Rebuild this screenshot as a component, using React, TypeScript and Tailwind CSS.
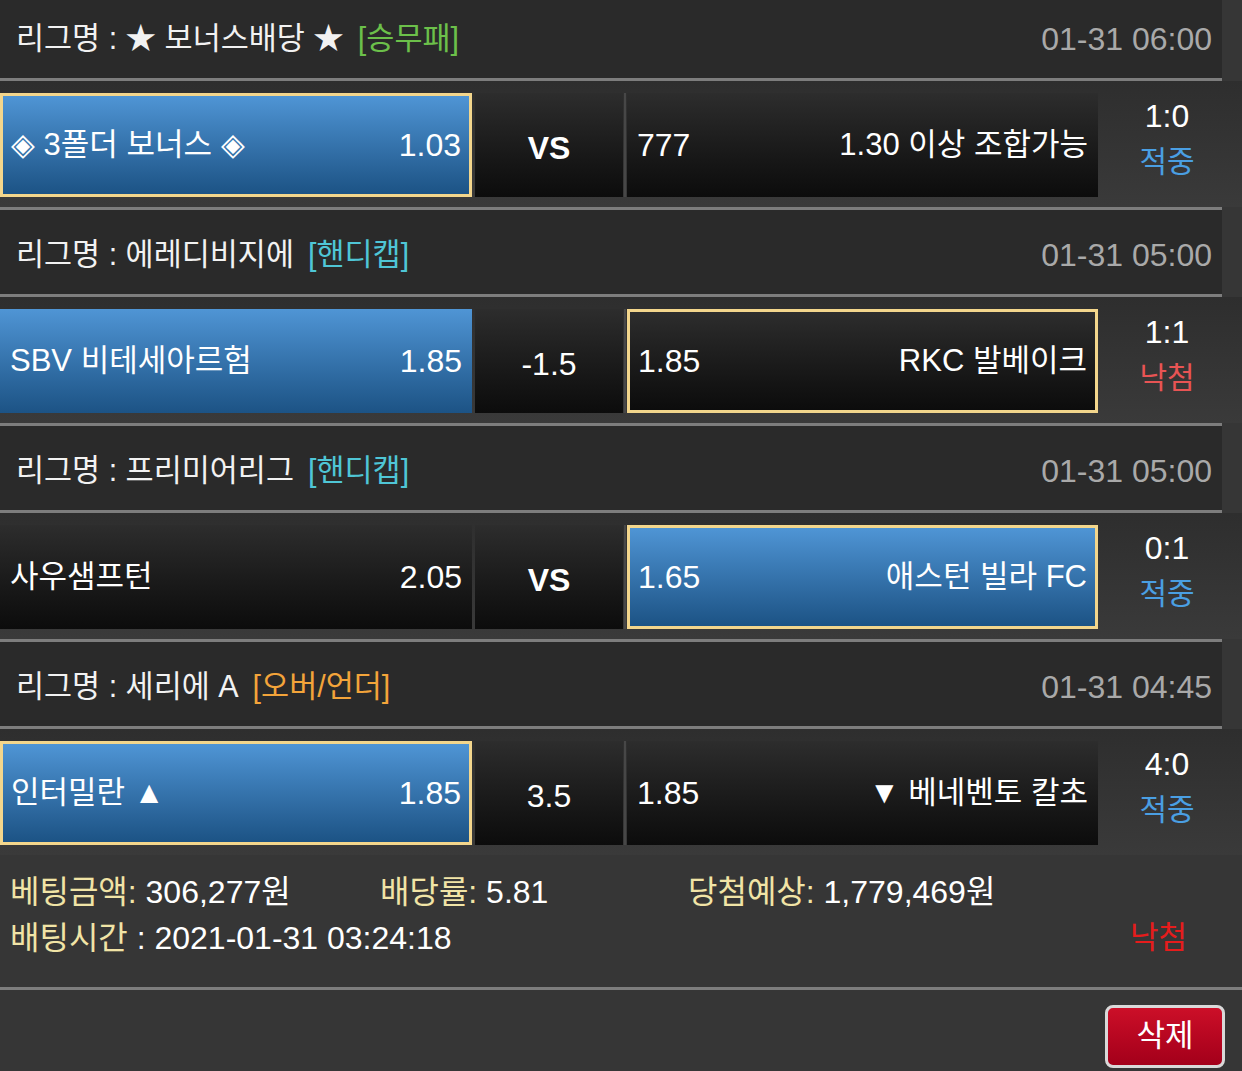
import React from "react";

type Cell = {
  name: string;
  odd: string;
  blue: boolean;
  selected: boolean;
};

type Bet = {
  league: string;
  tag: string;
  tagClass: string;
  date: string;
  home: Cell;
  mid: string;
  midBold?: boolean;
  away: Cell;
  score: string;
  result: string;
  resultClass: string;
};

const bets: Bet[] = [
  {
    league: "★ 보너스배당 ★",
    tag: "[승무패]",
    tagClass: "text-[#6cc04a]",
    date: "01-31 06:00",
    home: { name: "◈ 3폴더 보너스 ◈", odd: "1.03", blue: true, selected: true },
    mid: "VS",
    midBold: true,
    away: { name: "1.30 이상 조합가능", odd: "777", blue: false, selected: false },
    score: "1:0",
    result: "적중",
    resultClass: "text-[#4a9fe3]",
  },
  {
    league: "에레디비지에",
    tag: "[핸디캡]",
    tagClass: "text-[#4fc6d6]",
    date: "01-31 05:00",
    home: { name: "SBV 비테세아르험", odd: "1.85", blue: true, selected: false },
    mid: "-1.5",
    away: { name: "RKC 발베이크", odd: "1.85", blue: false, selected: true },
    score: "1:1",
    result: "낙첨",
    resultClass: "text-[#e85454]",
  },
  {
    league: "프리미어리그",
    tag: "[핸디캡]",
    tagClass: "text-[#4fc6d6]",
    date: "01-31 05:00",
    home: { name: "사우샘프턴", odd: "2.05", blue: false, selected: false },
    mid: "VS",
    midBold: true,
    away: { name: "애스턴 빌라 FC", odd: "1.65", blue: true, selected: true },
    score: "0:1",
    result: "적중",
    resultClass: "text-[#4a9fe3]",
  },
  {
    league: "세리에 A",
    tag: "[오버/언더]",
    tagClass: "text-[#f3a43a]",
    date: "01-31 04:45",
    home: { name: "인터밀란 ▲", odd: "1.85", blue: true, selected: true },
    mid: "3.5",
    away: { name: "▼ 베네벤토 칼초", odd: "1.85", blue: false, selected: false },
    score: "4:0",
    result: "적중",
    resultClass: "text-[#4a9fe3]",
  },
];

const font = { fontFamily: '"Liberation Sans", "Noto Sans CJK KR", sans-serif' };

function cellClass(cell: Cell, width: string) {
  const bg = cell.blue
    ? "bg-linear-to-b from-[#4f95d5] to-[#1c5385]"
    : "bg-linear-to-b from-[#2d2d2d] to-[#0c0c0c]";
  const border = cell.selected ? "border-[3px] border-[#f3d68c] px-[8px]" : "px-[10px]";
  return `flex h-[104px] ${width} items-center justify-between ${bg} ${border}`;
}

function BetBlock({ bet }: { bet: Bet }) {
  return (
    <div>
      {/* league header */}
      <div className="mr-[20px] flex h-[84px] items-center justify-between bg-[#2a2a2a] pl-[16px] pr-[10px] pt-[6px]">
        <div className="flex items-center gap-[14px] text-[30.5px] text-[#f2f2f2]">
          <span>리그명 : {bet.league}</span>
          <span className={bet.tagClass}>{bet.tag}</span>
        </div>
        <span className="text-[32px] text-[#a9a9a9]">{bet.date}</span>
      </div>
      <div className="mr-[20px] h-[3px] bg-[#7d7d7d]" />

      {/* match row */}
      <div className="flex h-[126px] items-start bg-linear-to-b from-[#2e2e2e] to-[#3a3a3a] pt-[12px]">
        <div className={cellClass(bet.home, "w-[472px]")}>
          <span className="text-[31px] text-white">{bet.home.name}</span>
          <span className="text-[32px] text-white">{bet.home.odd}</span>
        </div>
        <div className="ml-[3px] flex h-[104px] w-[148px] items-center justify-center bg-linear-to-b from-[#2d2d2d] to-[#0c0c0c] pt-[6px]">
          <span className={`text-[32px] text-white ${bet.midBold ? "font-bold" : ""}`}>{bet.mid}</span>
        </div>
        <div className="ml-[1px] h-[104px] w-[2px] bg-[#474747]" />
        <div className={`ml-[1px] ${cellClass(bet.away, "w-[471px]")}`}>
          <span className="text-[32px] text-white">{bet.away.odd}</span>
          <span className="text-[31px] text-white">{bet.away.name}</span>
        </div>
        <div className="flex h-[104px] w-[138px] flex-col items-center justify-center pb-[12px]">
          <span className="text-[32px] leading-[45px] text-white">{bet.score}</span>
          <span className={`text-[30px] leading-[45px] ${bet.resultClass}`}>{bet.result}</span>
        </div>
      </div>
    </div>
  );
}

export default function App() {
  return (
    <div className="h-[1071px] w-[1242px] overflow-hidden bg-[#363636]" style={font}>
      <div className="-mt-[6px]">
        {bets.map((bet, i) => (
          <div key={i}>
            <BetBlock bet={bet} />
            {i < bets.length - 1 && <div className="mr-[20px] h-[3px] bg-[#7d7d7d]" />}
          </div>
        ))}
      </div>

      {/* summary */}
      <div className="h-[132px] px-[10px] pt-[14px] text-[32px]">
        <div className="flex h-[46px] items-center">
          <div className="w-[370px]">
            <span className="text-[#f1e4a6]">베팅금액:</span>
            <span className="text-white"> 306,277원</span>
          </div>
          <div className="w-[308px]">
            <span className="text-[#f1e4a6]">배당률:</span>
            <span className="text-white"> 5.81</span>
          </div>
          <div>
            <span className="text-[#f1e4a6]">당첨예상:</span>
            <span className="text-white"> 1,779,469원</span>
          </div>
        </div>
        <div className="flex h-[46px] items-center justify-between pr-[45px]">
          <div>
            <span className="text-[#f1e4a6]">배팅시간</span>
            <span className="text-white"> : 2021-01-31 03:24:18</span>
          </div>
          <span className="text-[31px] text-[#e61c1c]">낙첨</span>
        </div>
      </div>
      <div className="h-[3px] bg-[#7d7d7d]" />

      <div className="flex justify-end pr-[17px] pt-[15px]">
        <button className="flex h-[63px] w-[120px] items-center justify-center rounded-[8px] border-[3px] border-[#d9d9d9] bg-linear-to-b from-[#cc0f28] to-[#a3001a] text-[31px] text-white">
          삭제
        </button>
      </div>
    </div>
  );
}
